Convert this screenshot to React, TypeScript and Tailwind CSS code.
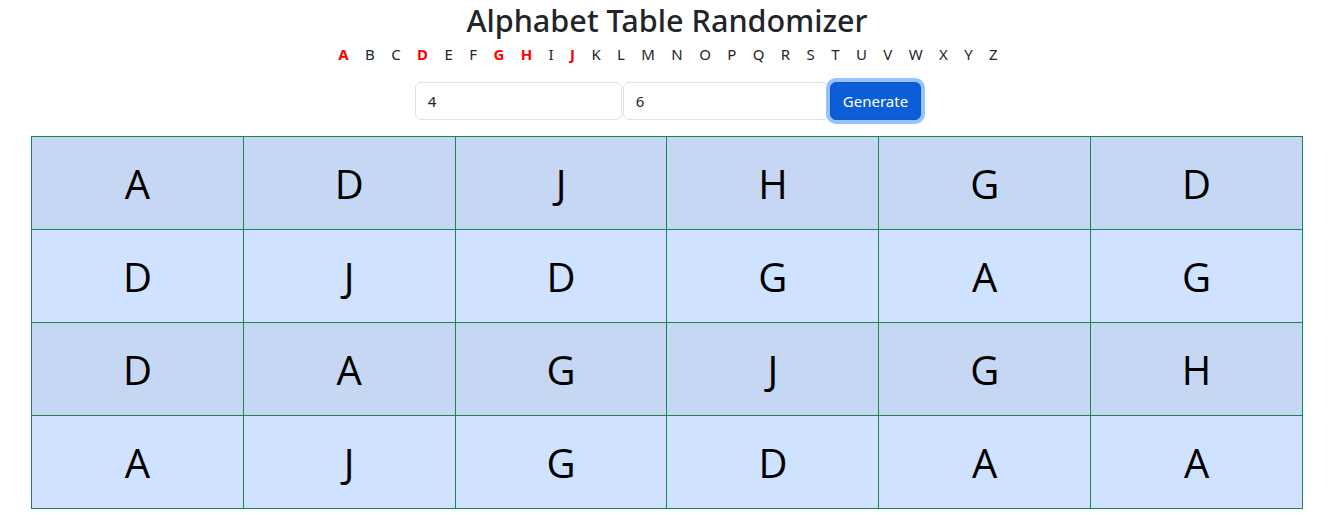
const letters = "ABCDEFGHIJKLMNOPQRSTUVWXYZ".split("");
const picked = ["A", "D", "G", "H", "J"];

const grid = [
  ["A", "D", "J", "H", "G", "D"],
  ["D", "J", "D", "G", "A", "G"],
  ["D", "A", "G", "J", "G", "H"],
  ["A", "J", "G", "D", "A", "A"],
];

export default function App() {
  return (
    <div className="min-h-[527px] bg-white text-[#212529] font-['Noto_Sans',sans-serif]">
      <div className="pr-[8px]">
        <h2 className="pt-[1px] text-center text-[30.6px] font-medium leading-[38px]">
          Alphabet Table Randomizer
        </h2>

        {/* alphabet legend */}
        <div className="mt-[5px] flex justify-center gap-[16.4px] pl-[2px] text-[15px] leading-[20px]">
          {letters.map((l) =>
            picked.includes(l) ? (
              <span key={l} className="font-bold text-[#ff0000]">
                {l}
              </span>
            ) : (
              <span key={l} className="text-[#212529]">
                {l}
              </span>
            )
          )}
        </div>
      </div>

      {/* controls */}
      <div className="mt-[18px] flex justify-center gap-[1px] pr-[6px]">
        <input
          defaultValue="4"
          className="h-[38px] w-[207px] rounded-[6px] border border-[#dee2e6] px-[12px] text-[15px] text-[#212529] outline-none"
        />
        <input
          defaultValue="6"
          className="h-[38px] w-[206px] rounded-[6px] border border-[#dee2e6] px-[12px] text-[15px] text-[#212529] outline-none"
        />
        <button className="h-[38px] rounded-[6px] border border-[#0a58ca] bg-[#0b5ed7] px-[12px] text-[15px] text-white ring-4 ring-[#98c1fe]">
          Generate
        </button>
      </div>

      {/* table */}
      <div className="mt-[16px] pl-[31px] pr-[39px]">
        <table className="w-[1272px] table-fixed border-collapse border border-[#198754] font-['Open_Sans',sans-serif]">
          <tbody>
            {grid.map((row, r) => (
              <tr
                key={r}
                className={r % 2 === 0 ? "bg-[#c5d7f2]" : "bg-[#cfe2ff]"}
              >
                {row.map((c, i) => (
                  <td
                    key={i}
                    className="h-[93px] border border-[#198754] pt-[2px] text-center align-middle text-[40px] text-black"
                  >
                    {c}
                  </td>
                ))}
              </tr>
            ))}
          </tbody>
        </table>
      </div>
    </div>
  );
}
